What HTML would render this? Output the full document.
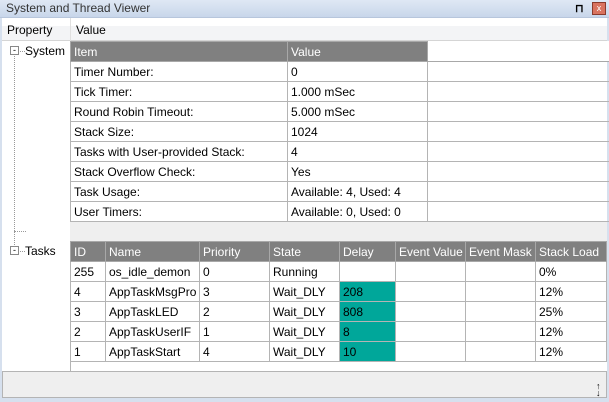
<!DOCTYPE html><html><head><style>
*{margin:0;padding:0;box-sizing:border-box}
body{width:609px;height:402px;overflow:hidden;background:#d6e0ee;font-family:"Liberation Sans",sans-serif;font-size:12px;color:#000;position:relative}
.a{position:absolute}
table{border-collapse:collapse;position:absolute;table-layout:fixed}
td{border:1px solid #b4b4b4;height:20px;padding:0 0 0 3px;white-space:nowrap;overflow:hidden;font-size:12px}
tr.h td{background:#808080;color:#fff;border-color:#a8a8a8}
.g{background:#00a79a}
</style></head><body>
<div class="a" style="left:0;top:0;width:609px;height:18px;background:linear-gradient(#dfe8f4,#c8d6ea);border-bottom:1px solid #b7c6dc"></div>
<div class="a" style="left:6px;top:1px;font-size:12px;color:#333">System and Thread Viewer</div>
<div class="a" style="left:575px;top:2px;font-size:11px;font-weight:bold">⊓</div>
<div class="a" style="left:592px;top:2px;width:14px;height:13px;background:#d9735f;border:1px solid #8a3a2c;color:#fff;font-size:9px;text-align:center;line-height:11px">x</div>
<div class="a" style="left:2px;top:18px;width:605px;height:353px;background:#fff"></div>
<div class="a" style="left:2px;top:26px;width:605px;height:15px;background:#f3f4f6;border-bottom:1px solid #d5d5d5"></div>
<div class="a" style="left:70px;top:18px;width:1px;height:23px;background:#e0e0e0"></div>
<div class="a" style="left:7px;top:23px;font-size:12px">Property</div>
<div class="a" style="left:76px;top:23px">Value</div>
<div class="a" style="left:70px;top:42px;width:537px;height:329px;background:#fff"></div>
<div class="a" style="left:70px;top:222px;width:537px;height:19px;background:#efefef"></div>
<div class="a" style="left:70px;top:362px;width:537px;height:9px;background:#fff;border-left:1px solid #b4b4b4"></div>
<div class="a" style="left:10px;top:46px;width:9px;height:9px;border:1px solid #888;font-size:9px;line-height:6px;text-align:center">-</div>
<div class="a" style="left:20px;top:51px;width:5px;border-top:1px dotted #999"></div>
<div class="a" style="left:14px;top:56px;height:195px;border-left:1px dotted #999"></div>
<div class="a" style="left:14px;top:231px;width:12px;border-top:1px dotted #999"></div>
<div class="a" style="left:25px;top:44px">System</div>
<div class="a" style="left:10px;top:246px;width:9px;height:9px;border:1px solid #888;font-size:9px;line-height:6px;text-align:center;background:#fff">-</div>
<div class="a" style="left:20px;top:251px;width:5px;border-top:1px dotted #999"></div>
<div class="a" style="left:25px;top:244px">Tasks</div>
<table style="left:70px;top:41px;width:539px">
<col style="width:217px"><col style="width:140px"><col style="width:182px">
<tr class="h"><td>Item</td><td>Value</td><td style="background:#fff;border-top-color:#fff"></td></tr>
<tr><td>Timer Number:</td><td>0</td><td></td></tr>
<tr><td>Tick Timer:</td><td>1.000 mSec</td><td></td></tr>
<tr><td>Round Robin Timeout:</td><td>5.000 mSec</td><td></td></tr>
<tr><td>Stack Size:</td><td>1024</td><td></td></tr>
<tr><td>Tasks with User-provided Stack:</td><td>4</td><td></td></tr>
<tr><td>Stack Overflow Check:</td><td>Yes</td><td></td></tr>
<tr><td>Task Usage:</td><td>Available: 4, Used: 4</td><td></td></tr>
<tr><td>User Timers:</td><td>Available: 0, Used: 0</td><td></td></tr>
</table>
<table style="left:70px;top:241px;width:536px">
<col style="width:35px"><col style="width:94px"><col style="width:70px"><col style="width:70px"><col style="width:56px"><col style="width:70px"><col style="width:70px"><col style="width:71px">
<tr class="h"><td>ID</td><td>Name</td><td>Priority</td><td>State</td><td>Delay</td><td>Event Value</td><td>Event Mask</td><td>Stack Load</td></tr>
<tr><td>255</td><td>os_idle_demon</td><td>0</td><td>Running</td><td></td><td></td><td></td><td>0%</td></tr>
<tr><td>4</td><td>AppTaskMsgPro</td><td>3</td><td>Wait_DLY</td><td class="g">208</td><td></td><td></td><td>12%</td></tr>
<tr><td>3</td><td>AppTaskLED</td><td>2</td><td>Wait_DLY</td><td class="g">808</td><td></td><td></td><td>25%</td></tr>
<tr><td>2</td><td>AppTaskUserIF</td><td>1</td><td>Wait_DLY</td><td class="g">8</td><td></td><td></td><td>12%</td></tr>
<tr><td>1</td><td>AppTaskStart</td><td>4</td><td>Wait_DLY</td><td class="g">10</td><td></td><td></td><td>12%</td></tr>
</table>
<div class="a" style="left:2px;top:371px;width:605px;height:27px;background:#efefef;border:1px solid #b4b4b4"></div>
<div class="a" style="left:596px;top:383px;font-size:9px;line-height:7px">↑<br>↓</div>
</body></html>
